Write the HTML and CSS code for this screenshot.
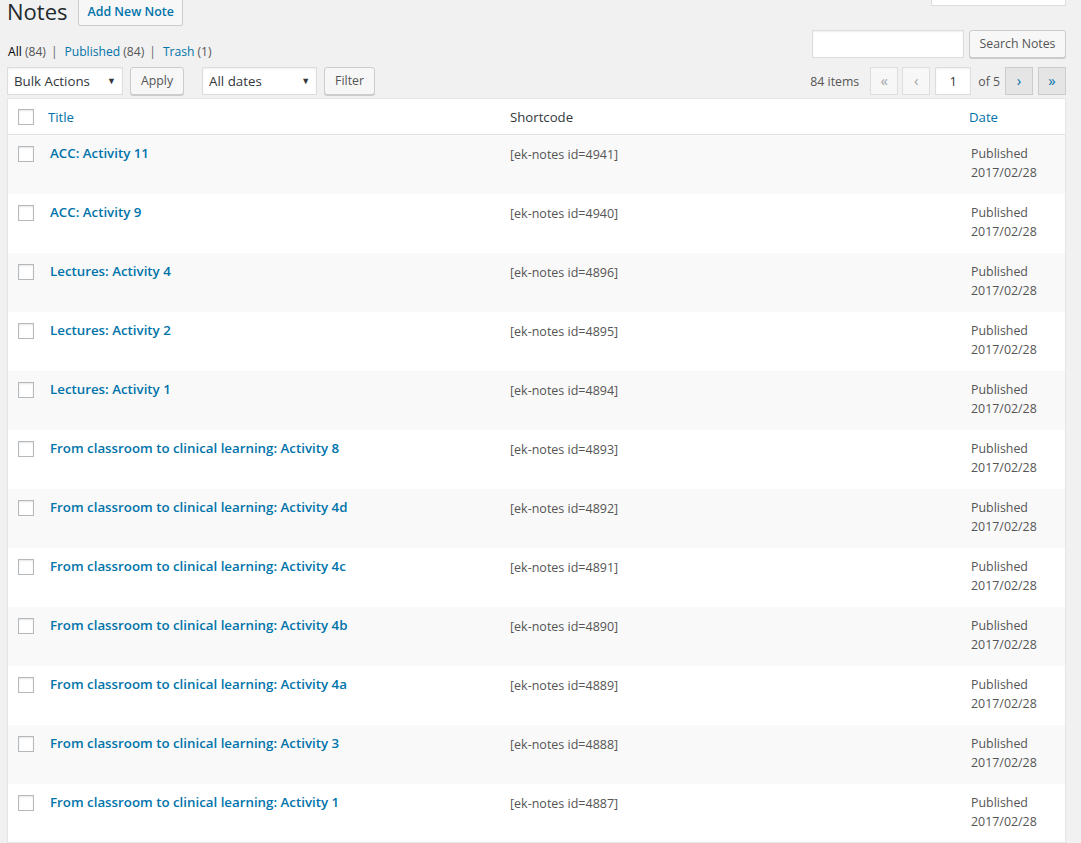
FILE: index.html
```html
<!DOCTYPE html>
<html>
<head>
    <meta http-equiv="Content-Type" content="text/html; charset=utf-8">
    <title>Notes</title>
    <link rel="stylesheet" href="styles.css">
</head>
<body>
    <div class="wrap">
        <!-- 标题 -->
        <div class="head">
            <h1>Notes</h1>
            <a class="page-title-action" href="#">Add New Note</a>
            <div class="screen-tab"></div>
        </div>
        <!-- 筛选和搜索 -->
        <div class="views-bar">
            <ul class="subsubsub">
                <li class="current">All <span class="count">(84)</span></li>
                <li class="sep">|</li>
                <li><a href="#">Published <span class="count">(84)</span></a></li>
                <li class="sep">|</li>
                <li><a href="#">Trash <span class="count">(1)</span></a></li>
            </ul>
            <div class="search-box">
                <input type="text" class="search-input" />
                <button class="button">Search Notes</button>
            </div>
        </div>
        <!-- 批量操作、分页 -->
        <div class="tablenav">
            <div class="actions">
                <div class="select w-bulk">Bulk Actions<span class="arrow">&#9660;</span></div>
                <button class="button">Apply</button>
            </div>
            <div class="actions">
                <div class="select w-dates">All dates<span class="arrow">&#9660;</span></div>
                <button class="button">Filter</button>
            </div>
            <div class="pages">
                <span class="num">84 items</span>
                <span class="pg disabled">&laquo;</span>
                <span class="pg disabled">&lsaquo;</span>
                <span class="cur">1</span>
                <span class="of">of 5</span>
                <a class="pg" href="#">&rsaquo;</a>
                <a class="pg" href="#">&raquo;</a>
            </div>
        </div>
        <!-- 列表 -->
        <table class="list">
            <thead>
                <tr>
                    <th class="col-cb"><span class="cb"></span></th>
                    <th class="col-title"><a href="#">Title</a></th>
                    <th class="col-code">Shortcode</th>
                    <th class="col-date"><a href="#">Date</a></th>
                </tr>
            </thead>
            <tbody>
                <tr class="alt">
                    <td class="col-cb"><span class="cb"></span></td>
                    <td class="col-title"><a href="#">ACC: Activity 11</a></td>
                    <td class="col-code">[ek-notes id=4941]</td>
                    <td class="col-date">Published<br>2017/02/28</td>
                </tr>
                <tr>
                    <td class="col-cb"><span class="cb"></span></td>
                    <td class="col-title"><a href="#">ACC: Activity 9</a></td>
                    <td class="col-code">[ek-notes id=4940]</td>
                    <td class="col-date">Published<br>2017/02/28</td>
                </tr>
                <tr class="alt">
                    <td class="col-cb"><span class="cb"></span></td>
                    <td class="col-title"><a href="#">Lectures: Activity 4</a></td>
                    <td class="col-code">[ek-notes id=4896]</td>
                    <td class="col-date">Published<br>2017/02/28</td>
                </tr>
                <tr>
                    <td class="col-cb"><span class="cb"></span></td>
                    <td class="col-title"><a href="#">Lectures: Activity 2</a></td>
                    <td class="col-code">[ek-notes id=4895]</td>
                    <td class="col-date">Published<br>2017/02/28</td>
                </tr>
                <tr class="alt">
                    <td class="col-cb"><span class="cb"></span></td>
                    <td class="col-title"><a href="#">Lectures: Activity 1</a></td>
                    <td class="col-code">[ek-notes id=4894]</td>
                    <td class="col-date">Published<br>2017/02/28</td>
                </tr>
                <tr>
                    <td class="col-cb"><span class="cb"></span></td>
                    <td class="col-title"><a href="#">From classroom to clinical learning: Activity 8</a></td>
                    <td class="col-code">[ek-notes id=4893]</td>
                    <td class="col-date">Published<br>2017/02/28</td>
                </tr>
                <tr class="alt">
                    <td class="col-cb"><span class="cb"></span></td>
                    <td class="col-title"><a href="#">From classroom to clinical learning: Activity 4d</a></td>
                    <td class="col-code">[ek-notes id=4892]</td>
                    <td class="col-date">Published<br>2017/02/28</td>
                </tr>
                <tr>
                    <td class="col-cb"><span class="cb"></span></td>
                    <td class="col-title"><a href="#">From classroom to clinical learning: Activity 4c</a></td>
                    <td class="col-code">[ek-notes id=4891]</td>
                    <td class="col-date">Published<br>2017/02/28</td>
                </tr>
                <tr class="alt">
                    <td class="col-cb"><span class="cb"></span></td>
                    <td class="col-title"><a href="#">From classroom to clinical learning: Activity 4b</a></td>
                    <td class="col-code">[ek-notes id=4890]</td>
                    <td class="col-date">Published<br>2017/02/28</td>
                </tr>
                <tr>
                    <td class="col-cb"><span class="cb"></span></td>
                    <td class="col-title"><a href="#">From classroom to clinical learning: Activity 4a</a></td>
                    <td class="col-code">[ek-notes id=4889]</td>
                    <td class="col-date">Published<br>2017/02/28</td>
                </tr>
                <tr class="alt">
                    <td class="col-cb"><span class="cb"></span></td>
                    <td class="col-title"><a href="#">From classroom to clinical learning: Activity 3</a></td>
                    <td class="col-code">[ek-notes id=4888]</td>
                    <td class="col-date">Published<br>2017/02/28</td>
                </tr>
                <tr>
                    <td class="col-cb"><span class="cb"></span></td>
                    <td class="col-title"><a href="#">From classroom to clinical learning: Activity 1</a></td>
                    <td class="col-code">[ek-notes id=4887]</td>
                    <td class="col-date">Published<br>2017/02/28</td>
                </tr>
            </tbody>
        </table>
    </div>
</body>
</html>
```

FILE: styles.css
```css
body,ul,li,h1,table,td,th,div,input,button{margin:0;padding:0;border:0;}
body{font-size:12.3px; font-family:"Open Sans","Liberation Sans",sans-serif; color:#444; background:#f1f1f1; overflow:hidden;}
ul{list-style:none;}
a{text-decoration:none; color:#0073aa;}

.wrap{ padding: 0 15px 0 7px; }

/* 标题 */
.head{ display: flex; align-items: flex-start; height: 30px; }
.head h1{ font-size: 22px; font-weight: 400; line-height: 23px; color: #23282d; }
.page-title-action{ margin-left: 11px; margin-top: -3px; padding: 4px 8px; border: 1px solid #ccc; border-radius: 2px;
    background: #f7f7f7; font-size: 12.4px; font-weight: 600; line-height: 19px; }
.screen-tab{ margin-left: auto; width: 133px; height: 5px; background: #fff; border: 1px solid #ddd; border-top: 0; }

/* 视图 */
.views-bar{ display: flex; align-items: center; justify-content: space-between; height: 28px; }
.subsubsub{ display: flex; font-size: 12.1px; color: #666; margin-top: 16px; margin-left: 1px; }
.subsubsub li{ line-height: 20px; }
.subsubsub .current{ color: #000; }
.subsubsub .count{ color: #555; }
.subsubsub .sep{ padding: 0 7px 0 5px; color: #666; }
.search-box{ display: flex; gap: 5px; }
.search-input{ width: 150px; height: 26px; background: #fff; border: 1px solid #ddd; box-shadow: inset 0 1px 2px rgba(0,0,0,.07); }

.button{ height: 28px; padding: 0 10px 1px; border: 1px solid #ccc; border-radius: 3px; background: #f7f7f7;
    box-shadow: 0 1px 0 #ccc; color: #555; font-family: inherit; font-size: 12.3px; line-height: 26px; white-space: nowrap; }
.search-box .button{ width: 97px; padding: 0; }

/* 工具栏 */
.tablenav{ display: flex; align-items: center; margin-top: 9px; height: 28px; }
.actions{ display: flex; gap: 7px; margin-right: 18px; }
.select{ position: relative; height: 26px; border: 1px solid #ddd; background: #fff; box-shadow: inset 0 1px 2px rgba(0,0,0,.07);
    color: #32373c; font-size: 13.3px; line-height: 26px; padding-left: 6px; }
.w-bulk{ width: 108px; }
.w-dates{ width: 107px; }
.select .arrow{ position: absolute; right: 6px; top: 0; font-size: 9px; color: #32373c; }
.pages{ margin-left: auto; display: flex; align-items: center; color: #555; }
.pages .num{ margin-right: 11px; }
.pg{ width: 26px; height: 26px; border: 1px solid #ccc; background: #e5e5e5; color: #0073aa; text-align: center;
    font-size: 15px; line-height: 24px; margin-left: 5px; }
.pages .num + .pg{ margin-left: 0; }
.pg.disabled{ background: #f7f7f7; border-color: #ddd; color: #a0a5aa; }
.pg.disabled + .pg.disabled{ margin-left: 4px; }
.cur{ width: 34px; height: 26px; margin-left: 5px; border: 1px solid #ddd; background: #fff; text-align: center;
    line-height: 26px; color: #32373c; font-size: 13px; box-shadow: inset 0 1px 2px rgba(0,0,0,.07); }
.of{ margin: 0 0 0 7px; }

/* 列表 */
.list{ width: 100%; margin-top: 3px; border: 1px solid #e5e5e5; border-collapse: collapse; background: #fff;
    box-shadow: 0 1px 1px rgba(0,0,0,.04); table-layout: fixed; }
.list th{ text-align: left; font-weight: 400; font-size: 13.2px; color: #32373c; height: 35px; padding: 0 10px;
    border-bottom: 1px solid #e1e1e1; vertical-align: middle; }
.list th.col-cb{ width: 20px; padding: 0 0 0 10px; }
.list th.col-title{ width: 442px; }
.list th.col-date{ width: 86px; }
.list tbody tr{ height: 59px; }
.list td{ vertical-align: top; padding: 9px 10px 0; color: #555; }
.list tr.alt td{ background: #f9f9f9; }
.list td.col-cb{ padding: 11px 0 0 10px; }
.cb{ display: block; width: 14px; height: 14px; border: 1px solid #b4b9be; background: #fff;
    box-shadow: inset 0 1px 2px rgba(0,0,0,.1); }
.list td.col-title{ padding-left: 12px; }
.list td.col-title a{ font-size: 13.3px; font-weight: 600; line-height: 19px; }
.list td.col-code{ font-size: 12.5px; line-height: 19px; padding-top: 10px; }
.list td.col-date{ font-size: 12.4px; line-height: 19px; padding-left: 12px; }
```
